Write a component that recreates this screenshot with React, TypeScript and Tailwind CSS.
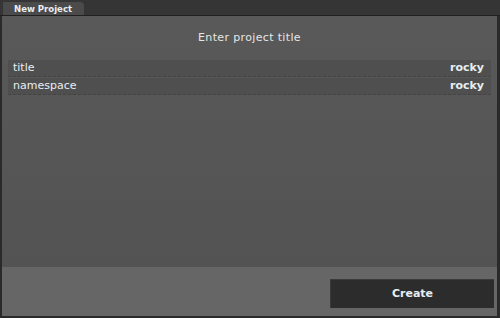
import React from "react";

export default function App() {
  const font = { fontFamily: '"DejaVu Sans", Verdana, sans-serif' };
  return (
    <div className="w-[500px] h-[318px] bg-[#2a2a2a] flex flex-col overflow-hidden" style={font}>
      <div className="h-[15px] bg-[#353535] flex items-end pl-[3px] shrink-0">
        <div
          className="h-[13px] w-[81px] shrink-0 bg-[#4b4b4b] rounded-tr-[4px] pl-[11px] text-[9.5px] font-bold text-[#e8eef4] leading-[13px] whitespace-nowrap"
          style={{ fontFamily: '"DejaVu Sans Condensed", "DejaVu Sans", sans-serif' }}
        >
          New Project
        </div>
      </div>
      <div className="h-px bg-[#202020] shrink-0" />
      <div className="flex-1 flex flex-col ml-[2px] mr-[3px] mb-[2px]">
        <div className="flex-1 bg-gradient-to-b from-[#595959] to-[#535353] flex flex-col px-[6px] pt-[15px]">
          <div className="text-center text-[11px] tracking-[0.35px] text-[#e6e6e6] leading-[14px]">Enter project title</div>
          <div className="mt-[15px] flex flex-col gap-[1px]">
            <div className="h-[17px] bg-[#4f4f4f] border-b border-dashed border-[#444] flex items-center justify-between pl-[5px] pr-[7px] text-[11px] text-[#e6eef4]">
              <span>title</span>
              <span className="font-bold">rocky</span>
            </div>
            <div className="h-[17px] bg-[#4f4f4f] border-b border-dashed border-[#444] flex items-center justify-between pl-[5px] pr-[7px] text-[11px] text-[#e6eef4]">
              <span>namespace</span>
              <span className="font-bold">rocky</span>
            </div>
          </div>
        </div>
        <div className="h-[49px] bg-[#666666] flex items-start justify-end pt-[12px] pr-[3px] shrink-0">
          <button className="w-[164px] h-[29px] bg-[#2c2c2c] border-l border-t border-[#3a3a3a] text-[11px] font-bold text-[#e6eef4]" style={font}>
            Create
          </button>
        </div>
      </div>
    </div>
  );
}
